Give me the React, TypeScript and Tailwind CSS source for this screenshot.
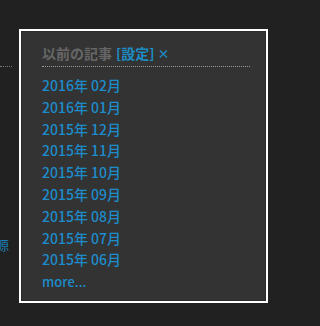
const MONTHS = [
  "2016年 02月",
  "2016年 01月",
  "2015年 12月",
  "2015年 11月",
  "2015年 10月",
  "2015年 09月",
  "2015年 08月",
  "2015年 07月",
  "2015年 06月",
];

const font = "font-['Noto_Sans_CJK_JP',sans-serif]";

export default function App() {
  return (
    <div className={`flex min-h-screen w-full bg-[#212121] ${font}`}>
      {/* sidebar peeking in from the left */}
      <div className="flex w-[19px] shrink-0 flex-col items-end overflow-hidden">
        <div className="mt-[66px] w-[12px] self-start border-t border-dotted border-[#777]" />
        <span className="mt-[46px] mr-[18px] whitespace-nowrap text-[13px] leading-4 text-[#1a7db0]">
          ト
        </span>
        <span className="mt-[41px] mr-[18px] whitespace-nowrap text-[13px] leading-4 text-[#1a7db0]">
          ス
        </span>
        <span className="mt-[51px] mr-[10px] whitespace-nowrap text-[13px] leading-4 text-[#1a7db0]">
          資源
        </span>
      </div>

      <div className="mt-[29px] h-[274px] w-[249px] shrink-0 border-2 border-white">
        <div className="h-full border border-[#2a2a2a] bg-[#333333] pt-[11px] pr-[15px] pl-[20px]">
          <div className="flex items-baseline text-[14px] leading-5 font-bold">
            <span className="text-[#666]">以前の記事</span>
            <span className="ml-[4px] text-[#1e8cc4]">[設定]</span>
            <span className="ml-[3px] text-[12px] text-[#1e8cc4]">×</span>
          </div>
          <div className="mt-[2px] border-t border-dotted border-[#9a9a9a]" />
          <ul className="mt-[8px] text-[14px] leading-[21.8px] font-medium text-[#1d8ccb]">
            {MONTHS.map((m) => (
              <li key={m}>{m}</li>
            ))}
            <li className="text-[13px]">more...</li>
          </ul>
        </div>
      </div>
    </div>
  );
}
